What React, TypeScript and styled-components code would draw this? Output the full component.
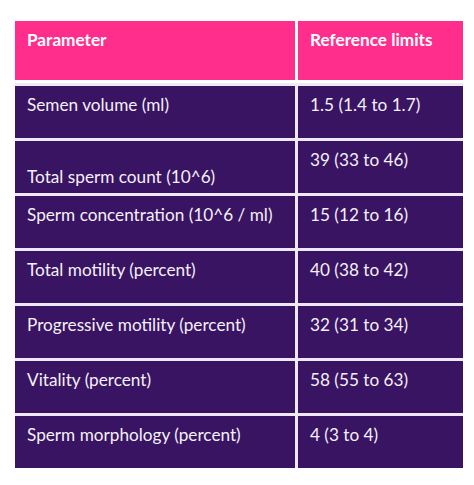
import React from 'react';
import styled, { createGlobalStyle } from 'styled-components';

interface iRow {
  name: string;
  limit: string;
  nameBottom?: boolean;
}

const rows: iRow[] = [
  { name: 'Semen volume (ml)', limit: '1.5 (1.4 to 1.7)' },
  { name: 'Total sperm count (10^6)', limit: '39 (33 to 46)', nameBottom: true },
  { name: 'Sperm concentration (10^6 / ml)', limit: '15 (12 to 16)' },
  { name: 'Total motility (percent)', limit: '40 (38 to 42)' },
  { name: 'Progressive motility (percent)', limit: '32 (31 to 34)' },
  { name: 'Vitality (percent)', limit: '58 (55 to 63)' },
  { name: 'Sperm morphology (percent)', limit: '4 (3 to 4)' },
];

const GlobalStyle = createGlobalStyle`
  body {
    margin: 0;
    background: #fff;
    font-family: Lato, 'Open Sans', sans-serif;
  }
`;

const Page = styled.div`
  padding: 21px 0 0 15px;
`;

const Table = styled.div`
  display: grid;
  grid-template-columns: 280px 165px;
  grid-template-rows: 62px;
  grid-auto-rows: 52px;
  gap: 3px;
  width: 448px;
  background: #efe9f5;
`;

const HeadCell = styled.div`
  background: #ff2e8d;
  color: #fff;
  font-weight: 700;
  font-size: 17.2px;
  height: 59px;
  margin-bottom: 3px;
  padding: 8px 12px 0;
  box-sizing: border-box;
  outline: 3px solid #fff;
`;

const Cell = styled.div<{ bottom?: boolean }>`
  background: #381462;
  color: #f4f0f8;
  font-size: 17.2px;
  display: flex;
  align-items: ${({ bottom }) => (bottom ? 'flex-end' : 'flex-start')};
  padding: ${({ bottom }) => (bottom ? '0 12px 6px' : '8px 12px 0')};
  box-sizing: border-box;
`;

const App: React.FC = () => {
  return (
    <>
      <GlobalStyle />
      <Page>
        <Table>
          <HeadCell>Parameter</HeadCell>
          <HeadCell>Reference limits</HeadCell>
          {rows.map(({ name, limit, nameBottom }) => (
            <React.Fragment key={name}>
              <Cell bottom={nameBottom}>{name}</Cell>
              <Cell>{limit}</Cell>
            </React.Fragment>
          ))}
        </Table>
      </Page>
    </>
  );
};

export default App;
